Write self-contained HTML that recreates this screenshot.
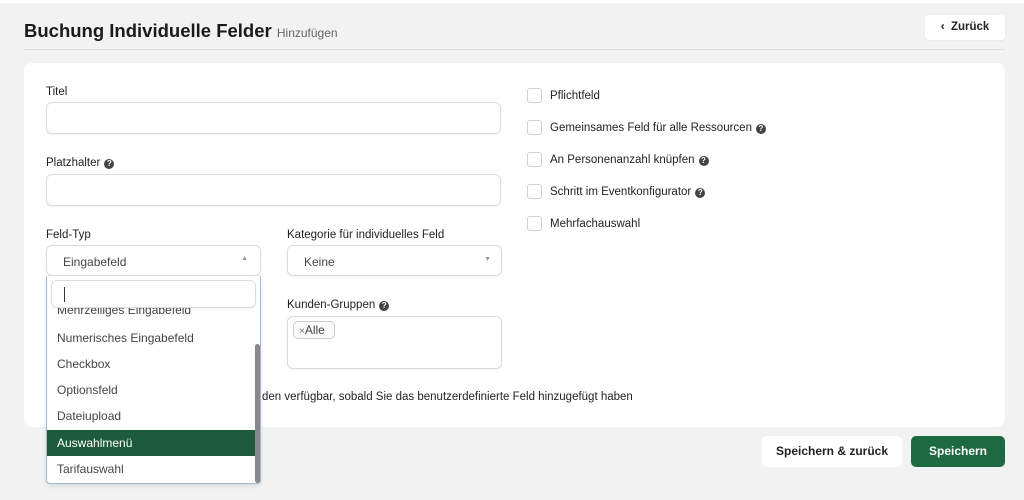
<!DOCTYPE html>
<html><head><meta charset="utf-8"><style>
*{box-sizing:border-box;margin:0;padding:0}
body{width:1024px;height:500px;background:#f1f2f1;font-family:"Liberation Sans",sans-serif;color:#222;position:relative;overflow:hidden}
.a{position:absolute}
.lbl{font-size:11.5px;color:#222}
.inp{background:#fff;border:1px solid #dcdcdc;border-radius:6px;box-shadow:0 1px 2px rgba(0,0,0,.06)}
.q{display:inline-block;width:10px;height:10px;border-radius:50%;background:#444;color:#fff;font-size:8px;line-height:10px;text-align:center;font-weight:bold;vertical-align:0px;margin-left:4px}
.cb{width:15px;height:15px;border:1px solid #d0d0d0;border-radius:3px;background:#fff}
.it{position:absolute;left:47px;width:209px;height:26px;font-size:12px;color:#444;padding-left:10px;line-height:26px}
</style></head><body>
<div class="a" style="left:0;top:0;width:1024px;height:3px;background:#fff"></div>
<div class="a" style="left:24px;top:20px;font-size:18.5px;font-weight:bold;color:#1a1a1a">Buchung Individuelle Felder <span style="font-size:12px;font-weight:normal;color:#666">Hinzufügen</span></div>
<div class="a" style="left:24px;top:49px;width:981px;height:1px;background:#ddd"></div>
<div class="a" style="left:925px;top:15px;width:80px;height:25px;background:#fff;border-radius:4px;font-size:11.5px;font-weight:bold;line-height:25px;text-align:center;box-shadow:0 1px 2px rgba(0,0,0,.05)">‹&nbsp;&nbsp;Zurück</div>
<div class="a" style="left:24px;top:63px;width:981px;height:364px;background:#fff;border-radius:8px"></div>

<div class="a lbl" style="left:46px;top:86px">Titel</div>
<div class="a inp" style="left:46px;top:102px;width:455px;height:32px"></div>
<div class="a lbl" style="left:46px;top:157px">Platzhalter<span class="q">?</span></div>
<div class="a inp" style="left:46px;top:174px;width:455px;height:32px"></div>
<div class="a lbl" style="left:46px;top:229px">Feld-Typ</div>
<div class="a inp" style="left:46px;top:245px;width:215px;height:31px;font-size:12px;color:#444;padding:9px 0 0 16px">Eingabefeld<span style="position:absolute;right:12px;top:9px;font-size:7px;color:#999">▲</span></div>
<div class="a lbl" style="left:287px;top:229px">Kategorie für individuelles Feld</div>
<div class="a inp" style="left:287px;top:245px;width:215px;height:31px;font-size:12px;color:#444;padding:9px 0 0 16px">Keine<span style="position:absolute;right:10px;top:10px;font-size:7px;color:#999">▼</span></div>
<div class="a lbl" style="left:287px;top:299px">Kunden-Gruppen<span class="q">?</span></div>
<div class="a inp" style="left:287px;top:316px;width:215px;height:53px"></div>
<div class="a" style="left:293px;top:321px;width:42px;height:18px;border:1px solid #ccc;border-radius:5px;font-size:12px;color:#444;line-height:16px;padding-left:5px;background:#fafafa"><span style="font-size:10px;color:#777">×</span>Alle</div>
<div class="a" style="left:262px;top:391px;font-size:11.5px;color:#222">den verfügbar, sobald Sie das benutzerdefinierte Feld hinzugefügt haben</div>

<div class="a" style="left:46px;top:276px;width:215px;height:208px;background:#fff;border:1px solid #9bbbd8;border-top:none;border-radius:0 0 4px 4px;box-shadow:0 2px 4px rgba(0,0,0,.1)"></div>
<div class="a" style="left:47px;top:300px;width:209px;height:17px;overflow:hidden"><div style="position:absolute;top:3px;left:10px;font-size:12px;color:#444">Mehrzeiliges Eingabefeld</div></div>
<div class="a inp" style="left:51px;top:280px;width:205px;height:28px"><div style="position:absolute;left:12px;top:6px;width:1px;height:15px;background:#333"></div></div>
<div class="it" style="top:325px">Numerisches Eingabefeld</div>
<div class="it" style="top:351px">Checkbox</div>
<div class="it" style="top:377px">Optionsfeld</div>
<div class="it" style="top:403px">Dateiupload</div>
<div class="it" style="top:430px;background:#1d5a3e;color:#fff">Auswahlmenü</div>
<div class="it" style="top:456px">Tarifauswahl</div>
<div class="a" style="left:255px;top:344px;width:5px;height:139px;background:#888;border-radius:3px"></div>

<div class="a cb" style="left:527px;top:88px"></div><div class="a lbl" style="left:550px;top:90px">Pflichtfeld</div>
<div class="a cb" style="left:527px;top:120px"></div><div class="a lbl" style="left:550px;top:122px">Gemeinsames Feld für alle Ressourcen<span class="q">?</span></div>
<div class="a cb" style="left:527px;top:152px"></div><div class="a lbl" style="left:550px;top:154px">An Personenanzahl knüpfen<span class="q">?</span></div>
<div class="a cb" style="left:527px;top:184px"></div><div class="a lbl" style="left:550px;top:186px">Schritt im Eventkonfigurator<span class="q">?</span></div>
<div class="a cb" style="left:527px;top:216px"></div><div class="a lbl" style="left:550px;top:218px">Mehrfachauswahl</div>

<div class="a" style="left:762px;top:436px;width:140px;height:31px;background:#fff;border-radius:5px;font-size:12px;font-weight:bold;text-align:center;line-height:31px">Speichern &amp; zurück</div>
<div class="a" style="left:911px;top:436px;width:94px;height:31px;background:#1d6a40;border-radius:5px;font-size:12px;font-weight:bold;color:#fff;text-align:center;line-height:31px">Speichern</div>
</body></html>
